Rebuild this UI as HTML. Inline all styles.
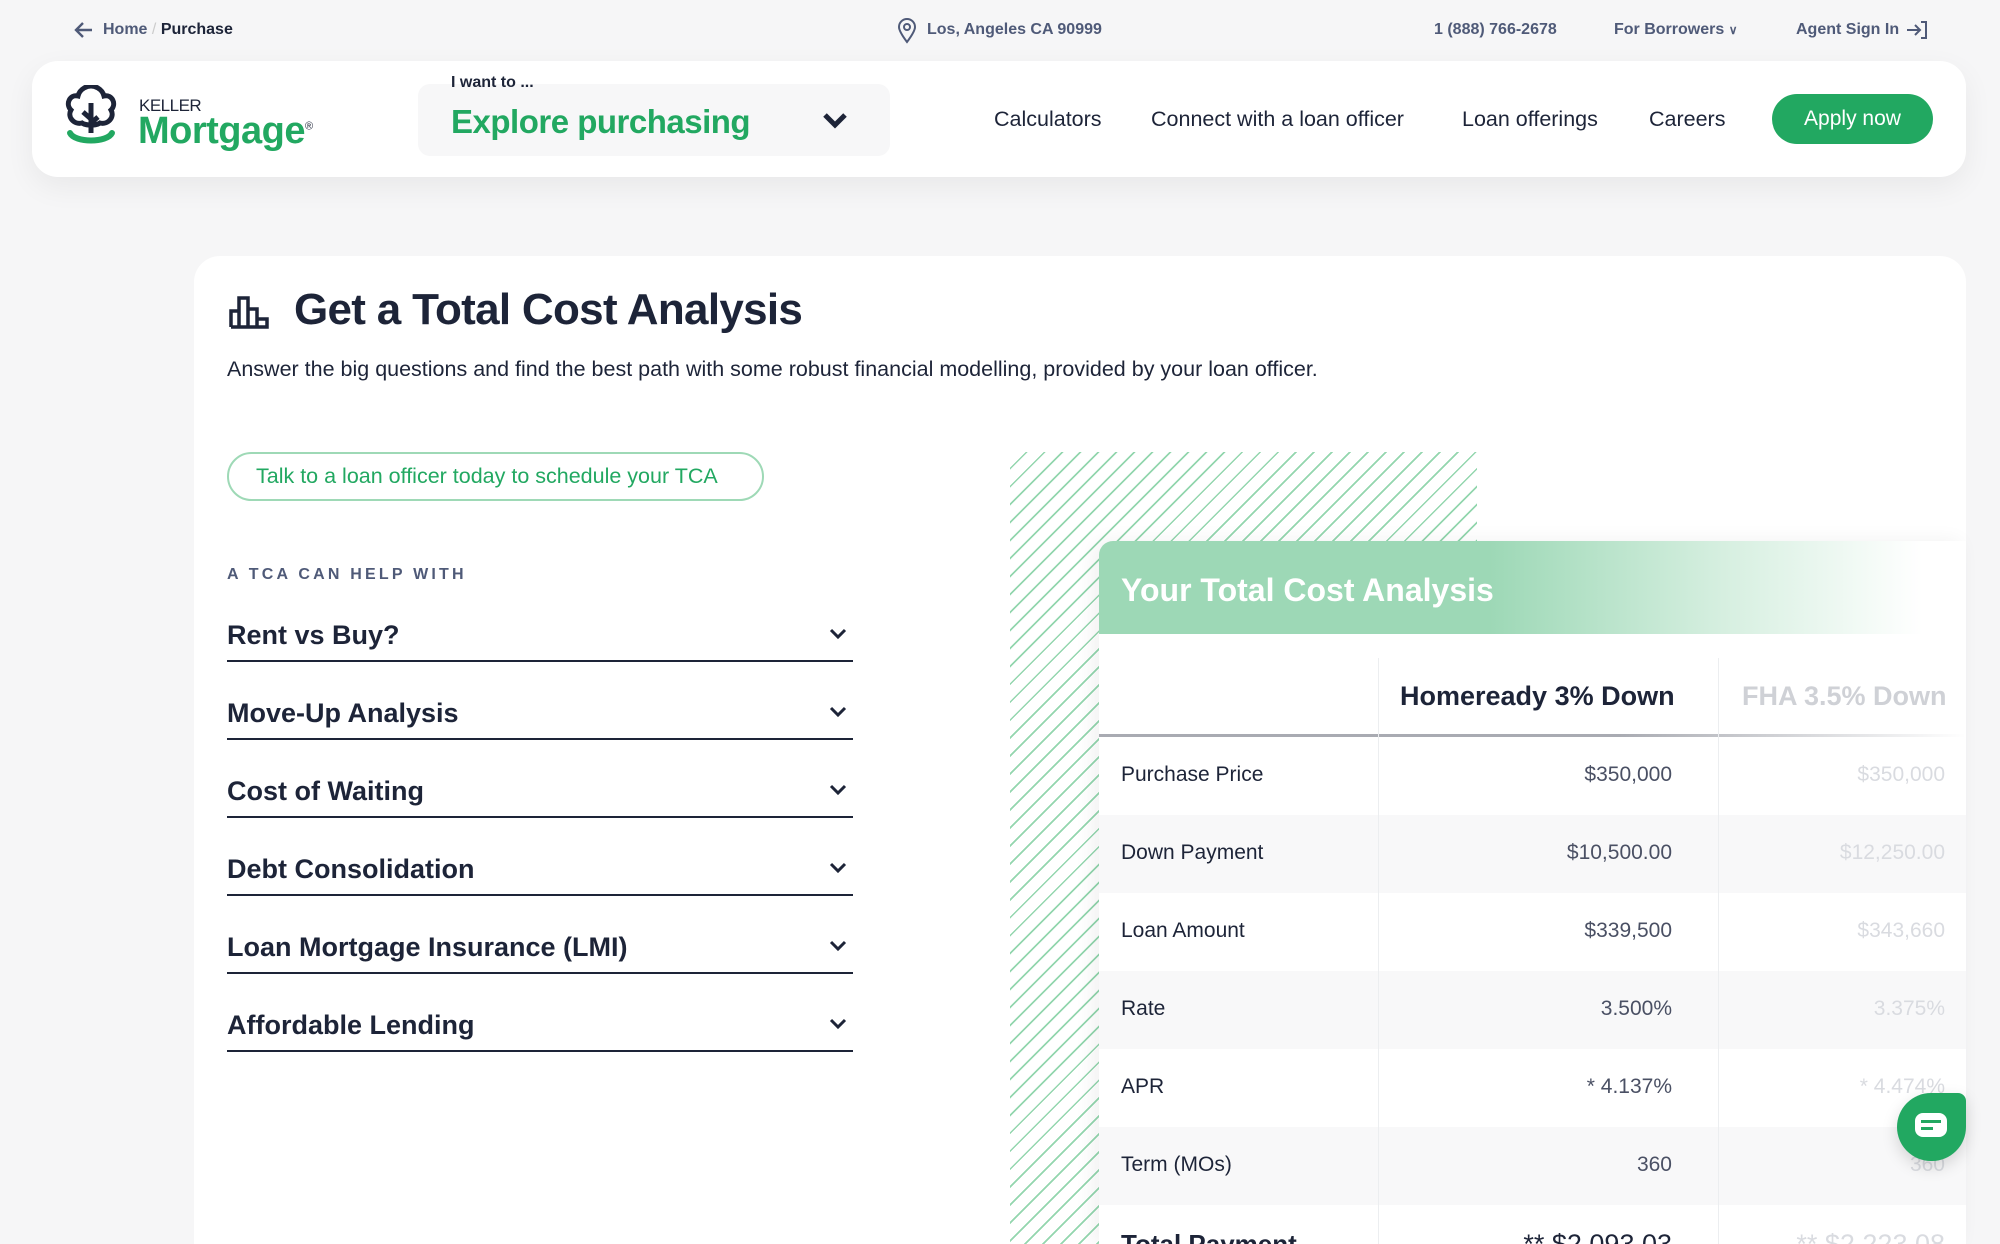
<!DOCTYPE html>
<html style="width:2000px;height:1244px;overflow:hidden"><head><meta charset="utf-8"><style>
*{box-sizing:border-box;margin:0;padding:0}
body{width:2000px;height:1244px;overflow:hidden;background:#f6f6f7;font-family:"Liberation Sans",sans-serif;color:#1d2438;position:relative}
.abs{position:absolute}
.top{font-size:16px;font-weight:bold;color:#4f5a78;top:21px}
.hdr{left:32px;top:61px;width:1934px;height:116px;background:#fff;border-radius:26px;box-shadow:0 10px 30px rgba(0,0,0,.06)}
.nav{font-size:21.5px;top:107px;color:#1d2438}
.main{left:194px;top:256px;width:1772px;height:988px;background:#fff;border-radius:26px 26px 0 0}
.acc{left:227px;width:626px;height:78px;border-bottom:2px solid #1d2438}
.acc span{position:absolute;left:0;top:36px;font-size:27px;font-weight:bold}
.acc svg{position:absolute;right:6px;top:44px}
.row{left:1099px;width:867px;height:78px}
.row .l{position:absolute;left:22px;top:26px;font-size:21px}
.row .v{position:absolute;right:294px;top:26px;font-size:21px;color:#4a5064}
.row .f{position:absolute;right:21px;top:26px;font-size:21px;color:#d9dbe0}
</style></head><body>
<svg class="abs" style="left:74px;top:20px" width="20" height="20" viewBox="0 0 20 20"><path d="M18 10H3M9 3L2 10l7 7" stroke="#4f5a78" stroke-width="2.4" fill="none"/></svg>
<div class="abs top" style="left:103px">Home <span style="color:#ccc;font-weight:normal">/</span> <span style="color:#1d2438">Purchase</span></div>
<svg class="abs" style="left:897px;top:18px" width="20" height="26" viewBox="0 0 20 26"><path d="M10 24C4 16 2 12 2 9a8 8 0 0116 0c0 3-2 7-8 15z" stroke="#4f5a78" stroke-width="2" fill="none"/><circle cx="10" cy="9" r="3" stroke="#4f5a78" stroke-width="2" fill="none"/></svg>
<div class="abs top" style="left:927px">Los, Angeles CA 90999</div>
<div class="abs top" style="left:1434px">1 (888) 766-2678</div>
<div class="abs top" style="left:1614px">For Borrowers <span style="font-size:12px">&#8744;</span></div>
<div class="abs top" style="left:1796px">Agent Sign In</div>
<svg class="abs" style="left:1906px;top:20px" width="22" height="20" viewBox="0 0 22 20"><path d="M1 10h12M9 5l5 5-5 5M15 2h5v16h-5" stroke="#4f5a78" stroke-width="2" fill="none"/></svg>

<div class="abs hdr"></div>
<svg class="abs" style="left:64px;top:85px" width="54" height="64" viewBox="0 0 54 64"><path d="M27 40c-3 0-6 0-9-2-8 2-15-6-11-13-6-6-1-16 7-14 2-8 10-10 13-10s11 2 13 10c8-2 13 8 7 14 4 7-3 15-11 13-3 2-6 2-9 2z" stroke="#1d2438" stroke-width="5" fill="none"/><path d="M27 18v30M27 34l-8-7M27 38l7-6" stroke="#1d2438" stroke-width="5" fill="none"/><path d="M6 48c5 10 37 10 42 0" stroke="#22a861" stroke-width="6" fill="none" stroke-linecap="round"/></svg>
<div class="abs" style="left:139px;top:96px;font-size:17px;color:#1d2438;letter-spacing:-0.5px">KELLER</div>
<div class="abs" style="left:138px;top:110px;font-size:38px;font-weight:bold;color:#22a861;letter-spacing:-0.5px">Mortgage<sup style="font-size:11px;color:#1d2438;font-weight:normal">®</sup></div>
<div class="abs" style="left:418px;top:84px;width:472px;height:72px;background:#f7f7f8;border-radius:12px"></div>
<div class="abs" style="left:451px;top:74px;font-size:16px;font-weight:bold;color:#1d2438">I want to ...</div>
<div class="abs" style="left:451px;top:103px;font-size:33px;font-weight:bold;color:#22a861;letter-spacing:-0.5px">Explore purchasing</div>
<svg class="abs" style="left:822px;top:112px" width="26" height="18" viewBox="0 0 26 18"><path d="M3 3l10 10L23 3" stroke="#1d2438" stroke-width="5" fill="none"/></svg>
<div class="abs nav" style="left:994px">Calculators</div>
<div class="abs nav" style="left:1151px">Connect with a loan officer</div>
<div class="abs nav" style="left:1462px">Loan offerings</div>
<div class="abs nav" style="left:1649px">Careers</div>
<div class="abs" style="left:1772px;top:94px;width:161px;height:50px;border-radius:25px;background:#22a861;color:#fff;font-size:21px;text-align:center;line-height:50px">Apply now</div>

<div class="abs main"></div>
<svg class="abs" style="left:229px;top:295px" width="42" height="34" viewBox="0 0 42 34"><path d="M2 32V16h8v16M10 32V3h9v29M19 32V14h9v18M28 32h-26" stroke="#1d2438" stroke-width="3.5" fill="none"/><path d="M28 24h10v8H28" stroke="#1d2438" stroke-width="3.5" fill="none"/></svg>
<div class="abs" style="left:294px;top:285px;font-size:44px;font-weight:bold;letter-spacing:-0.7px">Get a Total Cost Analysis</div>
<div class="abs" style="left:227px;top:357px;font-size:21.5px;color:#1d2438">Answer the big questions and find the best path with some robust financial modelling, provided by your loan officer.</div>
<div class="abs" style="left:227px;top:452px;width:537px;height:49px;border:2px solid #9ed9b6;border-radius:25px;color:#22a861;font-size:21.5px;line-height:45px;padding-left:27px">Talk to a loan officer today to schedule your TCA</div>
<div class="abs" style="left:227px;top:566px;font-size:16px;font-weight:bold;letter-spacing:3.2px;color:#4f5a78">A TCA CAN HELP WITH</div>

<div class="abs acc" style="top:584px"><span>Rent vs Buy?</span><svg width="18" height="12" viewBox="0 0 18 12"><path d="M2 2l7 7 7-7" stroke="#1d2438" stroke-width="3" fill="none"/></svg></div>
<div class="abs acc" style="top:662px"><span>Move-Up Analysis</span><svg width="18" height="12" viewBox="0 0 18 12"><path d="M2 2l7 7 7-7" stroke="#1d2438" stroke-width="3" fill="none"/></svg></div>
<div class="abs acc" style="top:740px"><span>Cost of Waiting</span><svg width="18" height="12" viewBox="0 0 18 12"><path d="M2 2l7 7 7-7" stroke="#1d2438" stroke-width="3" fill="none"/></svg></div>
<div class="abs acc" style="top:818px"><span>Debt Consolidation</span><svg width="18" height="12" viewBox="0 0 18 12"><path d="M2 2l7 7 7-7" stroke="#1d2438" stroke-width="3" fill="none"/></svg></div>
<div class="abs acc" style="top:896px"><span>Loan Mortgage Insurance (LMI)</span><svg width="18" height="12" viewBox="0 0 18 12"><path d="M2 2l7 7 7-7" stroke="#1d2438" stroke-width="3" fill="none"/></svg></div>
<div class="abs acc" style="top:974px"><span>Affordable Lending</span><svg width="18" height="12" viewBox="0 0 18 12"><path d="M2 2l7 7 7-7" stroke="#1d2438" stroke-width="3" fill="none"/></svg></div>

<div class="abs" style="left:1010px;top:452px;width:467px;height:792px;background:repeating-linear-gradient(135deg,transparent 0,transparent 11px,#93d6ae 11px,#93d6ae 12.7px)"></div>

<div class="abs" style="left:1099px;top:541px;width:867px;height:703px;background:#fff;border-radius:14px 0 0 0;box-shadow:-6px 0 20px rgba(0,0,0,.06);overflow:hidden">
  <div style="height:93px;background:linear-gradient(90deg,#9dd8b6 0%,#9dd8b6 45%,#d6efe0 72%,#fff 95%)"></div>
</div>
<div class="abs" style="left:1121px;top:572px;font-size:32px;font-weight:bold;color:#fff">Your Total Cost Analysis</div>
<div class="abs" style="left:1099px;top:734px;width:867px;height:3px;background:linear-gradient(90deg,#a9abb2 60%,#fff 100%)"></div>
<div class="abs" style="left:1400px;top:681px;font-size:27px;font-weight:bold;color:#1d2438">Homeready 3% Down</div>
<div class="abs" style="left:1742px;top:681px;font-size:27px;font-weight:bold;color:#cfd1d6">FHA 3.5% Down</div>

<div class="abs row" style="top:737px"><div class="l">Purchase Price</div><div class="v">$350,000</div><div class="f">$350,000</div></div>
<div class="abs row" style="top:815px;background:#f8f8f9"><div class="l">Down Payment</div><div class="v">$10,500.00</div><div class="f">$12,250.00</div></div>
<div class="abs row" style="top:893px"><div class="l">Loan Amount</div><div class="v">$339,500</div><div class="f">$343,660</div></div>
<div class="abs row" style="top:971px;background:#f8f8f9"><div class="l">Rate</div><div class="v">3.500%</div><div class="f">3.375%</div></div>
<div class="abs row" style="top:1049px"><div class="l">APR</div><div class="v">* 4.137%</div><div class="f">* 4.474%</div></div>
<div class="abs row" style="top:1127px;background:#f8f8f9"><div class="l">Term (MOs)</div><div class="v">360</div><div class="f">360</div></div>
<div class="abs row" style="top:1205px"><div class="l" style="font-weight:bold;font-size:26px;top:24px">Total Payment</div><div class="v" style="font-size:27px;top:24px;color:#1d2438">** $2,093.03</div><div class="f" style="font-size:27px;top:24px">** $2,223.08</div></div>
<div class="abs" style="left:1378px;top:658px;width:1px;height:586px;background:#eceef0"></div>
<div class="abs" style="left:1718px;top:658px;width:1px;height:586px;background:#eceef0"></div>

<div class="abs" style="left:1897px;top:1093px;width:69px;height:68px;background:#22a861;border-radius:34px 8px 34px 34px;box-shadow:0 6px 16px rgba(0,0,0,.15)"></div>
<svg class="abs" style="left:1913px;top:1110px" width="36" height="30" viewBox="0 0 36 30"><rect x="2" y="3" width="32" height="24" rx="8" fill="#fff"/><rect x="8" y="10" width="20" height="3" fill="#22a861"/><rect x="8" y="17" width="12" height="3" fill="#22a861"/></svg>
</body></html>
